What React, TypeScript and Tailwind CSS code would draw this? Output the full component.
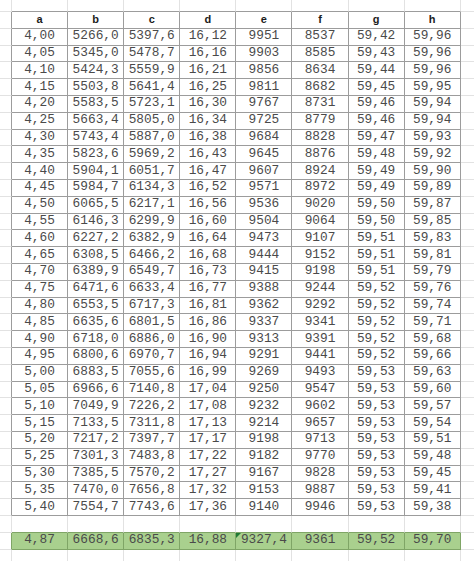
import React from 'react';

type RowKind = 'top' | 'header' | 'data' | 'blank' | 'total' | 'bottom';

const cols = ['a', 'b', 'c', 'd', 'e', 'f', 'g', 'h'];

const b = '5266,0 5345,0 5424,3 5503,8 5583,5 5663,4 5743,4 5823,6 5904,1 5984,7 6065,5 6146,3 6227,2 6308,5 6389,9 6471,6 6553,5 6635,6 6718,0 6800,6 6883,5 6966,6 7049,9 7133,5 7217,2 7301,3 7385,5 7470,0 7554,7'.split(' ');
const c = '5397,6 5478,7 5559,9 5641,4 5723,1 5805,0 5887,0 5969,2 6051,7 6134,3 6217,1 6299,9 6382,9 6466,2 6549,7 6633,4 6717,3 6801,5 6886,0 6970,7 7055,6 7140,8 7226,2 7311,8 7397,7 7483,8 7570,2 7656,8 7743,6'.split(' ');
const d = '16,12 16,16 16,21 16,25 16,30 16,34 16,38 16,43 16,47 16,52 16,56 16,60 16,64 16,68 16,73 16,77 16,81 16,86 16,90 16,94 16,99 17,04 17,08 17,13 17,17 17,22 17,27 17,32 17,36'.split(' ');
const e = '9951 9903 9856 9811 9767 9725 9684 9645 9607 9571 9536 9504 9473 9444 9415 9388 9362 9337 9313 9291 9269 9250 9232 9214 9198 9182 9167 9153 9140'.split(' ');
const f = '8537 8585 8634 8682 8731 8779 8828 8876 8924 8972 9020 9064 9107 9152 9198 9244 9292 9341 9391 9441 9493 9547 9602 9657 9713 9770 9828 9887 9946'.split(' ');
const g = '59,42 59,43 59,44 59,45 59,46 59,46 59,47 59,48 59,49 59,49 59,50 59,50 59,51 59,51 59,51 59,52 59,52 59,52 59,52 59,52 59,53 59,53 59,53 59,53 59,53 59,53 59,53 59,53 59,53'.split(' ');
const h = '59,96 59,96 59,96 59,95 59,94 59,94 59,93 59,92 59,90 59,89 59,87 59,85 59,83 59,81 59,79 59,76 59,74 59,71 59,68 59,66 59,63 59,60 59,57 59,54 59,51 59,48 59,45 59,41 59,38'.split(' ');

const rows: string[][] = b.map((_, i) => [
    (4 + i * 0.05).toFixed(2).replace('.', ','),
    b[i], c[i], d[i], e[i], f[i], g[i], h[i],
]);

const total = ['4,87', '6668,6', '6835,3', '16,88', '9327,4', '9361', '59,52', '59,70'];

function sideBorder(kind: RowKind) {
    if (kind === 'header' || kind === 'data') return 'border-[#9c9c9c]';
    if (kind === 'total') return 'border-[#7fa566]';
    return 'border-[#e2e2e2]';
}

function bottomBorder(kind: RowKind) {
    if (kind === 'top' || kind === 'header' || kind === 'data') return 'border-b border-b-[#9c9c9c]';
    if (kind === 'blank' || kind === 'total') return 'border-b border-b-[#7fa566]';
    return '';
}

function SheetRow({ kind, cells }: { kind: RowKind; cells?: string[] }) {
    const height = kind === 'top' ? 'h-[12px]' : kind === 'bottom' ? 'flex-1' : 'h-[16.8px]';
    const bg = kind === 'total' ? 'bg-[#a9d08e]' : '';
    const text =
        kind === 'header'
            ? "font-['Liberation_Sans',Arial,sans-serif] font-bold text-[11px] text-[#1c1c1c]"
            : "font-['Liberation_Mono','Courier_New',monospace] text-[12.8px] text-[#4a4a4a]";

    return (
        <div className={`flex shrink-0 ${height}`}>
            <div className={`w-[12px] shrink-0 border-r ${sideBorder(kind)} ${kind === 'bottom' ? '' : 'border-b border-b-[#e2e2e2]'}`} />
            {cols.map((col, i) => (
                <div
                    key={col}
                    className={`relative w-[56.1px] shrink-0 border-r ${sideBorder(kind)} ${bottomBorder(kind)} ${bg} ${text} flex items-center justify-center leading-none`}
                >
                    {cells ? cells[i] : ''}
                    {kind === 'total' && i === 4 && (
                        <span className="absolute left-0 top-0 w-0 h-0 border-t-[5px] border-t-[#1f7a34] border-r-[5px] border-r-transparent" />
                    )}
                </div>
            ))}
            <div className={`flex-1 ${kind === 'bottom' ? '' : 'border-b border-b-[#e2e2e2]'}`} />
        </div>
    );
}

export default function App() {
    return (
        <div className="w-[474px] h-[561px] bg-white overflow-hidden flex flex-col">
            <SheetRow kind="top" />
            <SheetRow kind="header" cells={cols} />
            {rows.map((r, i) => (
                <SheetRow key={i} kind="data" cells={r} />
            ))}
            <SheetRow kind="blank" />
            <SheetRow kind="total" cells={total} />
            <SheetRow kind="bottom" />
        </div>
    );
}
